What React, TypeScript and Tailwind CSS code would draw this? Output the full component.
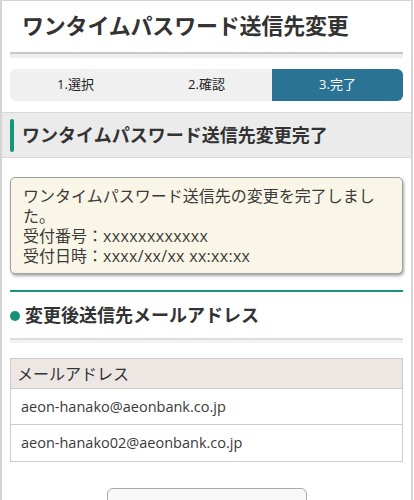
import React from 'react';

export default function App() {
  const steps = ['1.選択', '2.確認', '3.完了'];
  const emails = ['aeon-hanako@aeonbank.co.jp', 'aeon-hanako02@aeonbank.co.jp'];

  return (
    <div
      className="w-[413px] min-h-[500px] bg-white border-t border-x-2 border-[#d4d4d4] text-[#333]"
      style={{ fontFamily: '"Open Sans", "Noto Sans CJK JP", sans-serif' }}
    >
      {/* Page title */}
      <div className="px-2">
        <h1 className="pl-3 pt-2 pb-2.5 text-[22px] leading-[33px] font-bold tracking-[-0.2px]">
          ワンタイムパスワード送信先変更
        </h1>
        <div className="border-t-2 border-[#c8c8c8] h-[6px] bg-[#eeeeee]"></div>

        {/* Steps */}
        <div className="mt-[11px] h-8 grid grid-cols-3 bg-[#f0f0f0] rounded-md overflow-hidden text-[13px]">
          {steps.map((s, i) => (
            <div
              key={s}
              className={`flex items-center justify-center ${i === 2 ? 'bg-[#2b7395] text-white' : 'text-[#222]'}`}
            >
              {s}
            </div>
          ))}
        </div>
      </div>

      {/* Section header */}
      <div className="mt-[11px] border-y border-[#d8d8d8] bg-[#ebebeb] h-[46px] flex items-center px-2">
        <div className="w-1 h-[33px] rounded-sm bg-[#16957a]"></div>
        <h2 className="ml-2 text-[18px] font-bold">ワンタイムパスワード送信先変更完了</h2>
      </div>

      <div className="px-2">
        {/* Message */}
        <div className="mt-[19px] bg-[#faf6e7] border border-[#a0a0a0] rounded-[5px] shadow-[1px_2px_3px_rgba(0,0,0,0.35)] pl-3 pr-6 pt-2 pb-[7px] text-[16px] leading-[20px] text-[#3a3a3a]">
          <p>ワンタイムパスワード送信先の変更を完了しました。</p>
          <p>受付番号：<span className="tracking-[0.4px]">xxxxxxxxxxxx</span></p>
          <p>受付日時：<span className="tracking-[0.3px]">xxxx/xx/xx xx:xx:xx</span></p>
        </div>

        {/* Sub heading */}
        <div className="mt-4 border-t-2 border-[#17937a]">
          <div className="flex items-center pt-2.5 pb-[9px]">
            <span className="w-2.5 h-2.5 rounded-full bg-[#17937a]"></span>
            <h3 className="ml-[5px] text-[18px] leading-[27px] font-bold">変更後送信先メールアドレス</h3>
          </div>
          <div className="border-t-2 border-[#dcdcdc] h-[5px] bg-[#f2f2f2]"></div>
        </div>

        {/* Table */}
        <div className="mt-[15px] border border-[#cccccc]">
          <div className="h-[30px] bg-[#ece7e2] flex items-center pl-1.5 text-[16px] border-b border-[#cccccc]">
            メールアドレス
          </div>
          {emails.map((e, i) => (
            <div
              key={e}
              className={`h-[36px] flex items-center pl-2.5 text-[14.5px] text-[#3a3a3a] ${i === 0 ? 'border-b border-[#cccccc]' : ''}`}
            >
              {e}
            </div>
          ))}
        </div>

        {/* Button */}
        <div className="mt-[26px] flex justify-center">
          <div className="w-[200px] h-10 border border-[#aaaaaa] rounded-md bg-[#f8f8f8]"></div>
        </div>
      </div>
    </div>
  );
}
